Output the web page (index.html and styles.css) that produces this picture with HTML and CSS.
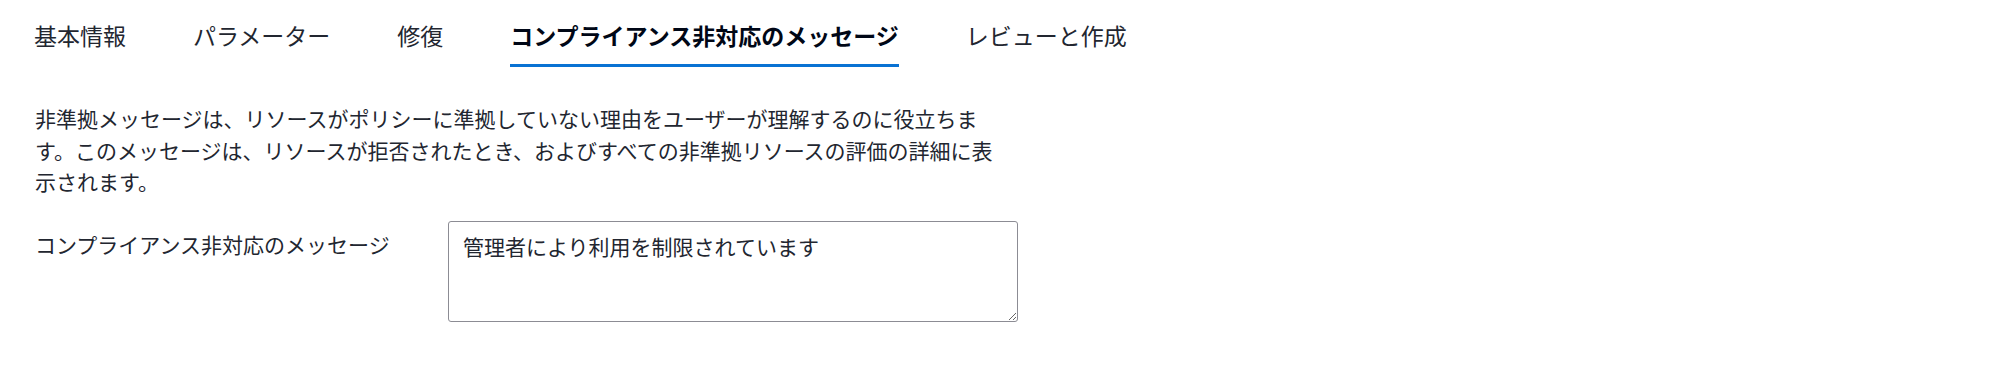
FILE: index.html
```html
<!DOCTYPE html>
<html lang="ja">
<head>
<meta charset="utf-8">
<title>コンプライアンス非対応のメッセージ</title>
<link rel="stylesheet" href="styles.css">
</head>
<body>
<div class="page">
  <nav class="tabs">
    <div class="tab">基本情報</div>
    <div class="tab">パラメーター</div>
    <div class="tab">修復</div>
    <div class="tab tab-active">コンプライアンス非対応のメッセージ</div>
    <div class="tab">レビューと作成</div>
  </nav>
  <p class="description">非準拠メッセージは、リソースがポリシーに準拠していない理由をユーザーが理解するのに役立ちます。このメッセージは、リソースが拒否されたとき、およびすべての非準拠リソースの評価の詳細に表示されます。</p>
  <div class="form-row">
    <label class="field-label" for="msg">コンプライアンス非対応のメッセージ</label>
    <textarea id="msg" class="field-input">管理者により利用を制限されています</textarea>
  </div>
</div>
</body>
</html>
```
FILE: styles.css
```css
html, body {
  margin: 0;
  padding: 0;
  background: #ffffff;
}

body {
  font-family: "Noto Sans CJK JP", "Noto Sans", sans-serif;
  color: #16191f;
}

.page {
  padding-left: 34px;
}

.tabs {
  display: flex;
  gap: 67px;
  padding-top: 17px;
}

.tab {
  font-size: 23px;
  line-height: 36px;
  padding-bottom: 11px;
  border-bottom: 3px solid transparent;
  color: #222630;
  white-space: nowrap;
}

.tab-active {
  font-weight: 700;
  color: #000716;
  border-bottom-color: #0972d3;
}

.description {
  margin: 36px 0 0 1px;
  width: 972px;
  font-size: 21px;
  line-height: 31.5px;
  color: #222630;
}

.form-row {
  display: grid;
  grid-template-columns: 413px 570px;
  margin-top: 23px;
  margin-left: 1px;
}

.field-label {
  font-size: 21px;
  line-height: 31.5px;
  padding-top: 8px;
  color: #222630;
}

.field-input {
  box-sizing: border-box;
  width: 570px;
  height: 101px;
  margin: 0;
  padding: 9px 14px 7px;
  border: 1px solid #8c8c94;
  border-radius: 3px;
  font-family: "Noto Sans CJK JP", "Noto Sans", sans-serif;
  font-size: 21px;
  line-height: 31.5px;
  color: #222630;
  background: #ffffff;
  resize: both;
}
```
